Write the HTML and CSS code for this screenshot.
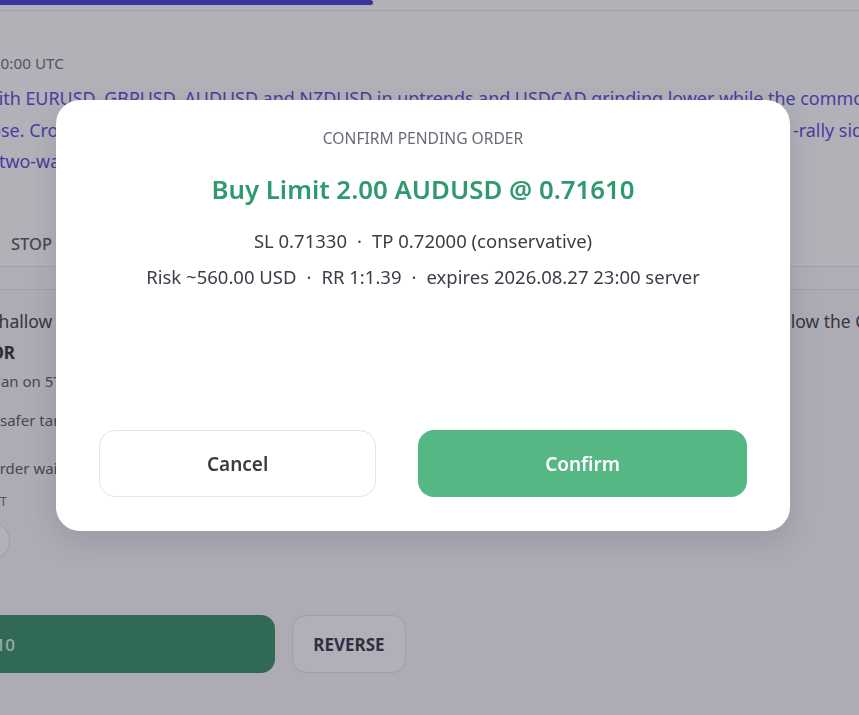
FILE: index.html
```html
<!DOCTYPE html>
<html lang="en">
<head>
<meta charset="utf-8">
<title>Confirm pending order</title>
<link rel="stylesheet" href="styles.css">
</head>
<body>
<div class="page">
  <div class="progress"><div class="progress-bar"></div></div>
  <div class="summary">
    <div class="stamp"><span>Updated 2026.08.27 20:00 UTC</span></div>
    <div class="brief">
      <span class="line first">With EURUSD, GBPUSD, AUDUSD and NZDUSD in uptrends and USDCAD grinding lower while the commodity bloc firms</span>
      <span class="line split">
        <span class="left-part">close. Crosses stay mixed, with the yen pairs consolidating after a strong post</span>
        <span>-rally sideways drift</span>
      </span>
      <span class="line third">two-way flow is likely into the weekly close.</span>
    </div>
    <div class="tabs">
      <span>MARKET</span>
      <span>LIMIT</span>
      <span class="tab-stop">STOP</span>
    </div>
  </div>
  <div class="strip"></div>
  <div class="content">
    <div class="row-wide">
      <span class="note-left">Shallow &nbsp; pullback into support, price holds</span>
      <span class="note-right">below the Cloud</span>
    </div>
    <div class="plan-title"><span>AUDUSD BUY LIMIT OR</span></div>
    <div class="plan-sub">Plan on 5T support zone</div>
    <div class="plan-sub safer">safer target at the prior high</div>
    <div class="plan-sub order">Order waits for the pullback</div>
    <div class="label">LOT</div>
    <div class="input-pill"></div>
    <div class="actions">
      <button class="btn-place">Place Buy Limit 2.00 @ 0.71610</button>
      <button class="btn-reverse">REVERSE</button>
    </div>
  </div>
</div>

<div class="overlay">
  <div class="modal">
    <div class="modal-title">CONFIRM PENDING ORDER</div>
    <div class="modal-head">Buy Limit 2.00 AUDUSD @ 0.71610</div>
    <div class="modal-line">SL 0.71330<span class="sep">·</span>TP 0.72000 (conservative)</div>
    <div class="modal-line second">Risk ~560.00 USD<span class="sep">·</span>RR 1:1.39<span class="sep">·</span>expires 2026.08.27 23:00 server</div>
    <div class="modal-actions">
      <button class="btn-cancel">Cancel</button>
      <button class="btn-confirm">Confirm</button>
    </div>
  </div>
</div>
</body>
</html>
```
FILE: styles.css
```css
* { box-sizing: border-box; }
html, body {
  margin: 0;
  padding: 0;
  width: 859px;
  height: 715px;
  overflow: hidden;
}
body {
  background: #f3f3f6;
  font-family: "Noto Sans", "Open Sans", sans-serif;
  color: #3f3f4a;
}
.page {
  margin-left: -212px;
  width: 1300px;
}
.progress {
  height: 11px;
  background: #fbfbfd;
  border-bottom: 1px solid #e3e3e8;
}
.progress-bar {
  width: 585px;
  height: 5px;
  background: #4c43d6;
  border-radius: 0 3px 3px 0;
}
.summary {
  background: #fbfbfd;
  height: 256px;
  padding-top: 41px;
  padding-left: 200px;
  border-bottom: 1px solid #e1e1e7;
}
.stamp {
  width: 76px;
  display: flex;
  justify-content: flex-end;
  white-space: nowrap;
  font-size: 15.3px;
  line-height: 22px;
  color: #70707a;
}
.brief {
  margin-top: 9px;
  font-size: 17.9px;
  line-height: 31.5px;
  color: #5b53d8;
}
.line {
  display: block;
  white-space: nowrap;
}
.line.first { margin-left: -6px; }
.line.split {
  display: flex;
  margin-left: -11px;
}
.left-part {
  flex: none;
  width: 816px;
  overflow: hidden;
}
.line.third { margin-left: 11px; }
.tabs {
  width: 64px;
  display: flex;
  justify-content: flex-end;
  gap: 26px;
  margin-top: 55px;
  white-space: nowrap;
  font-size: 16.5px;
  line-height: 22px;
  color: #60606a;
  font-weight: 500;
}
.strip {
  height: 23px;
  background: #f7f7fa;
  border-bottom: 1px solid #e3e3e8;
}
.content {
  padding-left: 200px;
  padding-top: 19px;
}
.row-wide {
  display: flex;
  font-size: 17.5px;
  line-height: 24px;
  color: #454550;
  white-space: nowrap;
  margin-left: 1px;
}
.note-left {
  flex: none;
  width: 781px;
  overflow: hidden;
}
.plan-title {
  width: 27px;
  display: flex;
  justify-content: flex-end;
  white-space: nowrap;
  margin-top: 8px;
  font-size: 17px;
  line-height: 24px;
  font-weight: 700;
  color: #363642;
}
.plan-sub {
  margin-top: 6px;
  font-size: 15px;
  line-height: 20px;
  color: #5e5e68;
  white-space: nowrap;
}
.plan-sub.safer { margin-top: 19px; margin-left: 12px; }
.plan-sub.order { margin-top: 28px; }
.label {
  margin-top: 16px;
  margin-left: -3px;
  font-size: 12px;
  line-height: 16px;
  color: #6d6d76;
}
.input-pill {
  margin-top: 12px;
  margin-left: -80px;
  width: 102px;
  height: 38px;
  border: 1px solid #dcdce2;
  border-radius: 19px;
  background: #fbfbfd;
}
.actions {
  display: flex;
  gap: 17px;
  margin-top: 55px;
  margin-left: -313px;
}
.btn-place {
  width: 600px;
  height: 58px;
  border: none;
  border-radius: 14px;
  background: #3b936b;
  color: #dcefe5;
  font-family: inherit;
  font-size: 17px;
  font-weight: 500;
  white-space: nowrap;
  text-align: right;
  padding: 0 260px 0 0;
}
.btn-reverse {
  width: 114px;
  height: 58px;
  border: 1px solid #dedee4;
  border-radius: 14px;
  background: #fafafc;
  color: #3c3c4c;
  font-family: inherit;
  font-size: 17px;
  font-weight: 700;
}
.overlay {
  position: fixed;
  inset: 0;
  background: rgba(24, 22, 40, 0.32);
  padding-top: 100px;
  padding-left: 56px;
}
.modal {
  width: 734px;
  height: 431px;
  background: #ffffff;
  border-radius: 24px;
  padding: 28px 43px 34px;
  display: flex;
  flex-direction: column;
  align-items: center;
  box-shadow: 0 10px 30px rgba(20, 20, 40, 0.12);
}
.modal-title {
  font-size: 15.6px;
  line-height: 20px;
  color: #6b6b78;
}
.modal-head {
  margin-top: 25px;
  font-size: 25.8px;
  line-height: 32px;
  font-weight: 600;
  color: #2f9a6e;
}
.modal-line {
  margin-top: 24px;
  font-size: 18.5px;
  line-height: 24px;
  color: #3d3d48;
}
.modal-line.second { margin-top: 12px; }
.sep { margin: 0 10px; }
.modal-actions {
  margin-top: auto;
  width: 100%;
  display: flex;
  gap: 42px;
}
.btn-cancel, .btn-confirm {
  height: 67px;
  border-radius: 16px;
  font-family: inherit;
  font-size: 19px;
  font-weight: 600;
}
.btn-cancel {
  flex: 275 1 0;
  background: #ffffff;
  border: 1px solid #e4e4ea;
  color: #3a3a44;
}
.btn-confirm {
  flex: 331 1 0;
  background: #55b884;
  border: none;
  color: #ffffff;
}
```
